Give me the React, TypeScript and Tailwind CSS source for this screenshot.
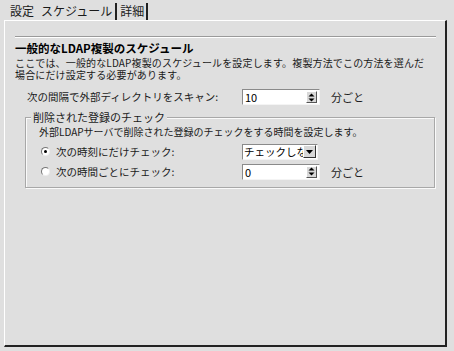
import React from 'react';

const font = { fontFamily: '"Noto Sans CJK JP", "Noto Sans", sans-serif' };

function SpinInput({ value }: { value: string }) {
  return (
    <div className="flex shrink-0 items-center w-[78px] h-[16px] bg-white border-t border-l border-[#8a8a8a] border-b border-r border-b-[#f4f4f4] border-r-[#f4f4f4]">
      <span className="flex-1 pl-[2px] text-[11px] leading-[14px] text-black">{value}</span>
      <span className="flex flex-col items-center justify-center w-[11px] h-[12px] mr-[2px] bg-[#d8d8d8] border border-t-white border-l-white border-b-[#555] border-r-[#555]">
        <svg width="7" height="9" viewBox="0 0 7 9">
          <path d="M3.5 0.5 L6.5 3.5 L0.5 3.5 Z" fill="#000" />
          <path d="M3.5 8.5 L6.5 5.5 L0.5 5.5 Z" fill="#000" />
        </svg>
      </span>
    </div>
  );
}

function SelectBox({ value }: { value: string }) {
  return (
    <div className="flex shrink-0 items-center w-[76px] h-[16px] bg-white border-t border-l border-[#8a8a8a] border-b border-r border-b-[#f4f4f4] border-r-[#f4f4f4] overflow-hidden">
      <span className="w-[60px] pl-[1px] text-[10.5px] leading-[14px] text-black whitespace-nowrap overflow-hidden">{value}</span>
      <span className="flex items-center justify-center w-[13px] h-[13px] bg-[#d8d8d8] border border-t-white border-l-white border-b-[#333] border-r-[#333]">
        <svg width="7" height="4" viewBox="0 0 7 4">
          <path d="M0 0 L7 0 L3.5 4 Z" fill="#000" />
        </svg>
      </span>
    </div>
  );
}

function Radio({ checked }: { checked?: boolean }) {
  return (
    <div className="flex items-center justify-center ml-[2px] w-[9px] h-[9px] rounded-full bg-white border border-t-[#777] border-l-[#777] border-b-[#eee] border-r-[#eee]">
      {checked ? <div className="w-[3px] h-[3px] rounded-full bg-black" /> : null}
    </div>
  );
}

export default function App() {
  return (
    <div className="w-[454px] h-[351px] bg-[#dfdfdf] overflow-hidden text-[#1a1a1a]" style={font}>
      {/* Tabs */}
      <div className="flex items-end h-[20px] pl-[10px] text-[12px] leading-[16px] whitespace-nowrap">
        <span className="pr-[6px] pb-[1px]">設定</span>
        <span className="pl-[1px] pr-[3px] pb-[1px] border-r-2 border-[#222]">スケジュール</span>
        <span className="pl-[3px] pr-[2px] pb-[1px] border-r-2 border-[#222]">詳細</span>
      </div>

      {/* Panel */}
      <div className="ml-[4px] w-[443px] h-[327px] border-l border-t border-white border-r-2 border-r-[#222] border-b-2 border-b-[#222]">
        <div className="px-[10px]">
          <div className="mt-[15px] w-[421px] h-[2px] border-t border-[#9a9a9a] border-b border-b-white" />
          <div className="mt-[3px] text-[11.5px] leading-[14px] font-bold text-black whitespace-nowrap">一般的なLDAP複製のスケジュール</div>
          <div className="mt-[2px] text-[10px] leading-[12px] tracking-[0.15px] whitespace-nowrap">
            <div>ここでは、一般的なLDAP複製のスケジュールを設定します。複製方法でこの方法を選んだ</div>
            <div>場合にだけ設定する必要があります。</div>
          </div>

          <div className="flex items-center mt-[8px] pl-[12px] text-[10.5px] whitespace-nowrap">
            <span className="w-[215px] shrink-0">次の間隔で外部ディレクトリをスキャン:</span>
            <SpinInput value="10" />
            <span className="ml-[11px] text-[11px]">分ごと</span>
          </div>

          {/* Group box */}
          <div className="mt-[11px] ml-[10px] w-[410px] h-[71px] border border-[#a8a8a8] shadow-[inset_1px_1px_0_#fafafa,1px_1px_0_#fafafa] pl-[13px] whitespace-nowrap">
            <div className="flex -mt-[7px] -ml-[8px] h-[13px] text-[11px] leading-[13px]">
              <span className="px-[2px] bg-[#dfdfdf]">削除された登録のチェック</span>
            </div>
            <div className="mt-[1px] text-[10px] leading-[13px]">外部LDAPサーバで削除された登録のチェックをする時間を設定します。</div>
            <div className="grid grid-cols-[17px_186px_78px_auto] grid-rows-[16px_16px] gap-y-[4px] items-center mt-[6px] text-[10.5px] leading-[14px]">
              <Radio checked />
              <span>次の時刻にだけチェック:</span>
              <SelectBox value="チェックしない" />
              <span />
              <Radio />
              <span>次の時間ごとにチェック:</span>
              <SpinInput value="0" />
              <span className="ml-[11px] text-[11px]">分ごと</span>
            </div>
          </div>
        </div>
      </div>
    </div>
  );
}
